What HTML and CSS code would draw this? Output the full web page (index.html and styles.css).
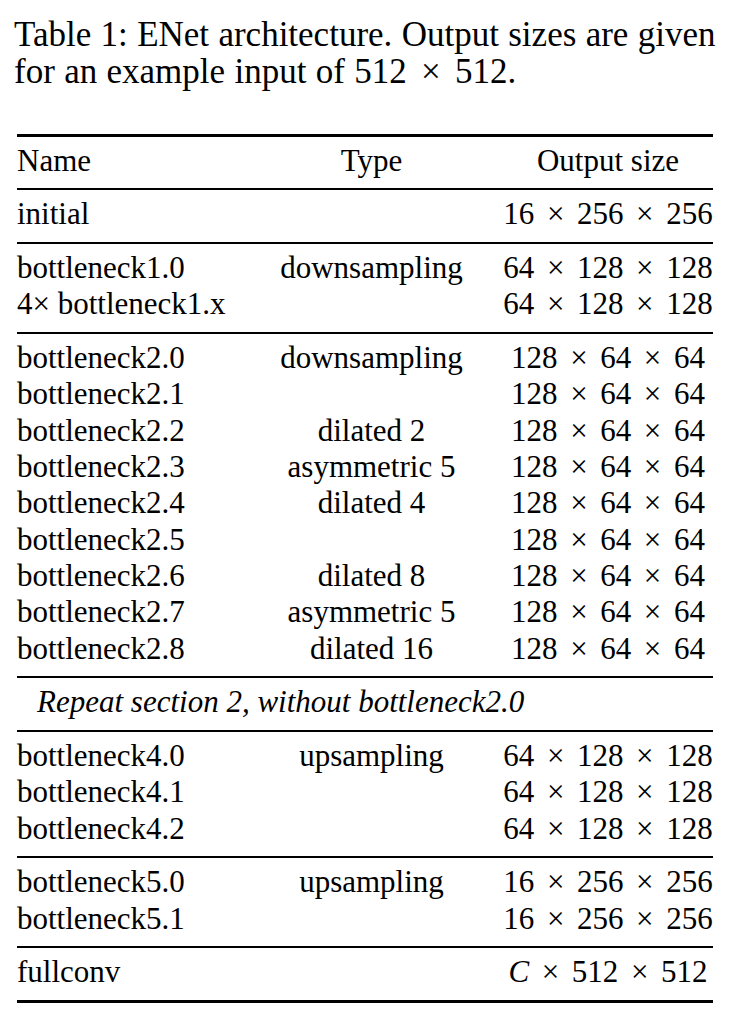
FILE: index.html
```html
<!DOCTYPE html>
<html lang="en">
<head>
    <meta charset="UTF-8">
    <meta name="viewport" content="width=device-width, initial-scale=1.0">
    <title>ENet architecture</title>
    <link rel="stylesheet" href="styles.css">
</head>
<body>
    <div class="page">
        <p class="caption">Table 1: ENet architecture. Output sizes are given<br>for an example input of 512<span class="x">×</span>512.</p>

        <table class="arch">
            <colgroup>
                <col class="col-name">
                <col class="col-type">
                <col class="col-out">
            </colgroup>
            <thead>
                <tr>
                    <th class="name">Name</th>
                    <th>Type</th>
                    <th>Output size</th>
                </tr>
            </thead>
            <tbody>
                <tr><td class="name">initial</td><td></td><td>16<span class="x">×</span>256<span class="x">×</span>256</td></tr>
            </tbody>
            <tbody>
                <tr><td class="name">bottleneck1.0</td><td>downsampling</td><td>64<span class="x">×</span>128<span class="x">×</span>128</td></tr>
                <tr><td class="name">4× bottleneck1.x</td><td></td><td>64<span class="x">×</span>128<span class="x">×</span>128</td></tr>
            </tbody>
            <tbody>
                <tr><td class="name">bottleneck2.0</td><td>downsampling</td><td>128<span class="x">×</span>64<span class="x">×</span>64</td></tr>
                <tr><td class="name">bottleneck2.1</td><td></td><td>128<span class="x">×</span>64<span class="x">×</span>64</td></tr>
                <tr><td class="name">bottleneck2.2</td><td>dilated 2</td><td>128<span class="x">×</span>64<span class="x">×</span>64</td></tr>
                <tr><td class="name">bottleneck2.3</td><td>asymmetric 5</td><td>128<span class="x">×</span>64<span class="x">×</span>64</td></tr>
                <tr><td class="name">bottleneck2.4</td><td>dilated 4</td><td>128<span class="x">×</span>64<span class="x">×</span>64</td></tr>
                <tr><td class="name">bottleneck2.5</td><td></td><td>128<span class="x">×</span>64<span class="x">×</span>64</td></tr>
                <tr><td class="name">bottleneck2.6</td><td>dilated 8</td><td>128<span class="x">×</span>64<span class="x">×</span>64</td></tr>
                <tr><td class="name">bottleneck2.7</td><td>asymmetric 5</td><td>128<span class="x">×</span>64<span class="x">×</span>64</td></tr>
                <tr><td class="name">bottleneck2.8</td><td>dilated 16</td><td>128<span class="x">×</span>64<span class="x">×</span>64</td></tr>
            </tbody>
            <tbody>
                <tr><td class="note" colspan="3">Repeat section 2, without bottleneck2.0</td></tr>
            </tbody>
            <tbody>
                <tr><td class="name">bottleneck4.0</td><td>upsampling</td><td>64<span class="x">×</span>128<span class="x">×</span>128</td></tr>
                <tr><td class="name">bottleneck4.1</td><td></td><td>64<span class="x">×</span>128<span class="x">×</span>128</td></tr>
                <tr><td class="name">bottleneck4.2</td><td></td><td>64<span class="x">×</span>128<span class="x">×</span>128</td></tr>
            </tbody>
            <tbody>
                <tr><td class="name">bottleneck5.0</td><td>upsampling</td><td>16<span class="x">×</span>256<span class="x">×</span>256</td></tr>
                <tr><td class="name">bottleneck5.1</td><td></td><td>16<span class="x">×</span>256<span class="x">×</span>256</td></tr>
            </tbody>
            <tbody>
                <tr><td class="name">fullconv</td><td></td><td><i>C</i><span class="x">×</span>512<span class="x">×</span>512</td></tr>
            </tbody>
        </table>
    </div>
</body>
</html>
```

FILE: styles.css
```css
body {
    margin: 0;
    padding: 0;
    background: #fff;
    color: #000;
    font-family: "Liberation Serif", "Times New Roman", serif;
}
.page {
    padding: 16px 0 0 14px;
}
.caption {
    margin: 0;
    font-size: 35px;
    line-height: 37px;
    word-spacing: 0.6px;
}
/* multiplication sign, spaced like a math binary operator */
.x {
    display: inline-block;
    width: 0.778em;
    margin: 0 0.3em;
    text-align: center;
}
.arch {
    margin: 44px 0 0 3px;
    width: 696px;
    table-layout: fixed;
    border-collapse: separate;
    border-spacing: 0;
    font-size: 31px;
    line-height: 36.35px;
}
.col-name {
    width: 223px;
}
.col-type {
    width: 263px;
}
.col-out {
    width: 210px;
}
.arch th,
.arch td {
    padding: 0;
    text-align: center;
    font-weight: normal;
    white-space: nowrap;
}
.arch .name {
    text-align: left;
}
.arch .note {
    text-align: left;
    padding-left: 20px;
    font-style: italic;
}
.arch thead th {
    border-top: 3px solid #000;
    padding-top: 6px;
    padding-bottom: 8.6px;
}
.arch tbody tr:first-child td {
    border-top: 2px solid #000;
    padding-top: 6.5px;
}
.arch tbody tr:last-child td {
    padding-bottom: 8.8px;
}
.arch tbody:last-child tr:last-child td {
    border-bottom: 3px solid #000;
}
```
